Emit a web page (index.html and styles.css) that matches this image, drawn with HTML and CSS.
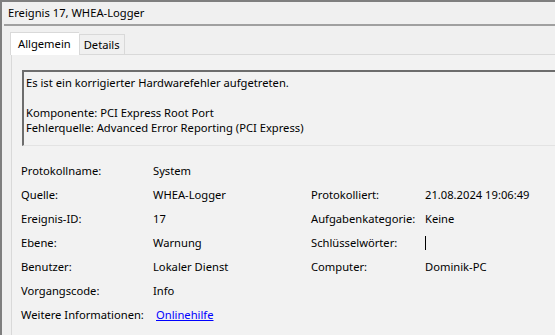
FILE: index.html
```html
<!DOCTYPE html>
<html lang="de">
<head>
    <meta charset="UTF-8">
    <meta name="viewport" content="width=device-width, initial-scale=1.0">
    <title>Ereignis 17, WHEA-Logger</title>
    <link rel="stylesheet" href="styles.css">
</head>
<body>
    <div class="window">
        <!-- Titelzeile -->
        <div class="titlebar">Ereignis 17, WHEA-Logger</div>

        <!-- Registerkarten -->
        <div class="tabs">
            <div class="tab active">Allgemein</div>
            <div class="tab">Details</div>
        </div>

        <div class="panel">
            <!-- Beschreibung -->
            <div class="message">
                <p>Es ist ein korrigierter Hardwarefehler aufgetreten.</p>
                <p>&nbsp;</p>
                <p>Komponente: PCI Express Root Port</p>
                <p>Fehlerquelle: Advanced Error Reporting (PCI Express)</p>
            </div>

            <!-- Eigenschaften -->
            <div class="fields">
                <span>Protokollname:</span>
                <span>System</span>
                <span></span>
                <span></span>

                <span>Quelle:</span>
                <span>WHEA-Logger</span>
                <span>Protokolliert:</span>
                <span>21.08.2024 19:06:49</span>

                <span>Ereignis-ID:</span>
                <span>17</span>
                <span>Aufgabenkategorie:</span>
                <span>Keine</span>

                <span>Ebene:</span>
                <span>Warnung</span>
                <span>Schlüsselwörter:</span>
                <span><i class="caret"></i></span>

                <span>Benutzer:</span>
                <span>Lokaler Dienst</span>
                <span>Computer:</span>
                <span>Dominik-PC</span>

                <span>Vorgangscode:</span>
                <span>Info</span>
                <span></span>
                <span></span>

                <span>Weitere Informationen:</span>
                <span><a class="link" href="#">Onlinehilfe</a></span>
                <span></span>
                <span></span>
            </div>
        </div>
    </div>
</body>
</html>
```

FILE: styles.css
```css
body {
    margin: 0;
    padding: 0;
    overflow: hidden;
    background-color: #f0f0f0;
    color: #000;
    font-family: 'Noto Sans', 'Segoe UI', sans-serif;
    font-size: 11.2px;
}

.window {
    height: 335px;
    box-sizing: border-box;
    border-top: 2px solid #7f7f7f;
    border-left: 2px solid #7f7f7f;
    overflow: hidden;
}

/* Titelzeile */
.titlebar {
    height: 22px;
    line-height: 22px;
    padding-left: 4px;
    margin-left: 2px;
    border-bottom: 2px solid #a0a0a0;
}

/* Registerkarten */
.tabs {
    display: flex;
    align-items: flex-end;
    padding: 6px 0 0 8px;
}

.tab {
    height: 19px;
    line-height: 19px;
    padding: 0 4px;
    border: 1px solid #d9d9d9;
    border-bottom: none;
    background-color: #f0f0f0;
}

.tab.active {
    height: 22px;
    line-height: 22px;
    padding: 0 8px 0 7px;
    background-color: #fff;
    position: relative;
    margin-bottom: -1px;
    z-index: 1;
    border-right: none;
}

.panel {
    margin-left: 9px;
    border-top: 1px solid #d9d9d9;
    border-left: 1px solid #d9d9d9;
    background-color: #f2f2f2;
    padding: 15px 0 0 10px;
    height: 300px;
}

/* Beschreibung */
.message {
    width: 600px;
    border-top: 2px solid #6d6d6d;
    border-left: 2px solid #6d6d6d;
    border-bottom: 1px solid #e3e3e3;
    padding: 3px 2px 10px;
}

.message p {
    margin: 0;
    line-height: 15px;
}

/* Eigenschaften */
.fields {
    display: grid;
    grid-template-columns: 132px 158px 114px 1fr;
    grid-auto-rows: 24px;
    align-items: center;
    margin-top: 12px;
    margin-left: -1px;
}

.link {
    padding-left: 3px;
    color: #0000ff;
}

.caret {
    display: inline-block;
    width: 1px;
    height: 14px;
    background-color: #000;
    vertical-align: middle;
}
```
